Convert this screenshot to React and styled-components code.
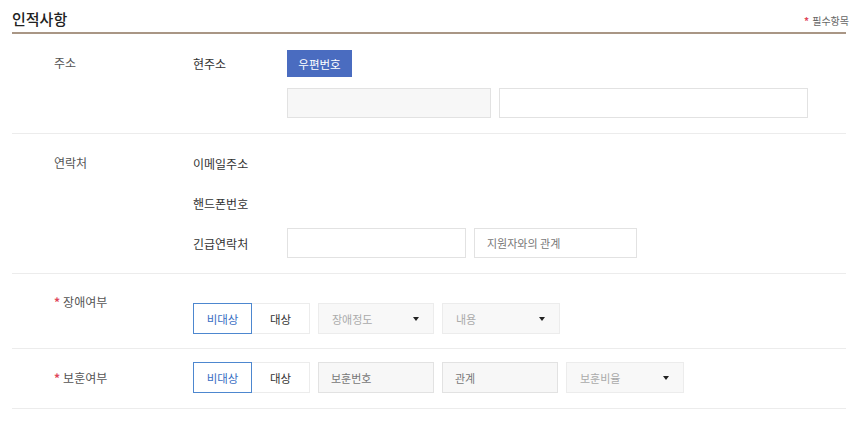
import styled, { createGlobalStyle } from "styled-components";

const GlobalStyle = createGlobalStyle`
  html, body {
    margin: 0;
    padding: 0;
    background: #fff;
  }
  body {
    font-family: "Noto Sans CJK KR", "Noto Sans", sans-serif;
    color: #333;
  }
  * {
    box-sizing: border-box;
  }
`;

function App() {
  return (
    <Page>
      <GlobalStyle />
      <Header>
        <Title>인적사항</Title>
        <Required>
          <Star>*</Star>필수항목
        </Required>
      </Header>

      <Row $pt={16} $pb={15}>
        <Label $top={5}>주소</Label>
        <Body>
          <SubRow>
            <SubLabel>현주소</SubLabel>
            <PrimaryButton>우편번호</PrimaryButton>
          </SubRow>
          <SubRow>
            <SubLabel />
            <Input $w={204} $h={30} $disabled />
            <Input $w={309} $h={30} />
          </SubRow>
        </Body>
      </Row>

      <Row $pt={14} $pb={15}>
        <Label $top={7}>연락처</Label>
        <Body $gap={10}>
          <SubRow $h={30}>
            <SubLabel>이메일주소</SubLabel>
          </SubRow>
          <SubRow $h={30}>
            <SubLabel>핸드폰번호</SubLabel>
          </SubRow>
          <SubRow $h={30}>
            <SubLabel>긴급연락처</SubLabel>
            <Input $w={179} $h={30} />
            <Input $w={163} $h={30} placeholder="지원자와의 관계" />
          </SubRow>
        </Body>
      </Row>

      <Row $pt={29} $pb={14}>
        <Label $top={-9}>
          <Star>*</Star>장애여부
        </Label>
        <Body>
          <SubRow>
            <Toggle>
              <ToggleButton $active>비대상</ToggleButton>
              <ToggleButton>대상</ToggleButton>
            </Toggle>
            <Select $w={116}>
              장애정도
              <Caret />
            </Select>
            <Select $w={118}>
              내용
              <Caret />
            </Select>
          </SubRow>
        </Body>
      </Row>

      <Row $pt={13} $pb={15}>
        <Label $top={8}>
          <Star>*</Star>보훈여부
        </Label>
        <Body>
          <SubRow>
            <Toggle>
              <ToggleButton $active>비대상</ToggleButton>
              <ToggleButton>대상</ToggleButton>
            </Toggle>
            <Input $w={116} $disabled placeholder="보훈번호" />
            <Input $w={116} $disabled placeholder="관계" />
            <Select $w={118}>
              보훈비율
              <Caret />
            </Select>
          </SubRow>
        </Body>
      </Row>
    </Page>
  );
}

const Page = styled.div`
  width: 856px;
  padding: 0 10px 0 12px;
`;

const Header = styled.div`
  display: flex;
  align-items: flex-end;
  justify-content: space-between;
  height: 34px;
  padding: 0 0 4px 0;
  border-bottom: 2px solid #a99685;
`;

const Title = styled.h2`
  margin: 0;
  font-size: 15px;
  font-weight: 500;
  color: #222;
  line-height: 18px;
`;

const Required = styled.span`
  font-size: 10px;
  color: #666;
  line-height: 14px;
  margin-right: -3px;
  margin-bottom: 0;
`;

const Star = styled.span`
  color: #e0465a;
  font-weight: 700;
  margin-right: 3px;
`;

const Row = styled.div`
  display: flex;
  padding: ${(p) => p.$pt}px 0 ${(p) => p.$pb}px 0;
  border-bottom: 1px solid #ececec;
`;

const Label = styled.div`
  width: 181px;
  flex-shrink: 0;
  padding-left: 42px;
  padding-top: ${(p) => Math.max(p.$top, 0)}px;
  margin-top: ${(p) => Math.min(p.$top, 0)}px;
  font-size: 12px;
  line-height: 16px;
  color: #555;
`;

const Body = styled.div`
  display: flex;
  flex-direction: column;
  gap: ${(p) => p.$gap ?? 11}px;
`;

const SubRow = styled.div`
  display: flex;
  align-items: center;
  gap: 8px;
  min-height: ${(p) => p.$h ?? 0}px;
`;

const SubLabel = styled.div`
  width: 86px;
  flex-shrink: 0;
  font-size: 12px;
  color: #333;
`;

const PrimaryButton = styled.button`
  width: 65px;
  height: 27px;
  border: none;
  background: #4a6cc0;
  color: #fff;
  font-family: inherit;
  font-size: 11.5px;
  padding: 0;
`;

const Input = styled.input.attrs((p) => ({ readOnly: p.$disabled }))`
  width: ${(p) => p.$w}px;
  height: ${(p) => p.$h ?? 31}px;
  border: 1px solid #e2e2e2;
  background: ${(p) => (p.$disabled ? "#f7f7f7" : "#fff")};
  font-family: inherit;
  font-size: 11px;
  padding: 0 12px;
  outline: none;

  &::placeholder {
    color: #777;
  }
`;

const Toggle = styled.div`
  display: flex;
  height: 31px;
`;

const ToggleButton = styled.button`
  width: ${(p) => (p.$active ? 59 : 58)}px;
  height: 31px;
  padding: 0;
  font-family: inherit;
  font-size: 11.5px;
  background: #fff;
  color: ${(p) => (p.$active ? "#3a6fc4" : "#333")};
  border: 1px solid ${(p) => (p.$active ? "#4d87cf" : "#ececec")};
  ${(p) => !p.$active && "border-left: none;"}
`;

const Select = styled.div`
  width: ${(p) => p.$w}px;
  height: 31px;
  display: flex;
  align-items: center;
  justify-content: space-between;
  padding: 0 14px 0 13px;
  border: 1px solid #ececec;
  background: #f8f8f8;
  font-size: 11px;
  color: #aaa;
`;

const Caret = styled.span`
  width: 0;
  height: 0;
  border-left: 3px solid transparent;
  border-right: 3px solid transparent;
  border-top: 4px solid #222;
`;

export default App;
